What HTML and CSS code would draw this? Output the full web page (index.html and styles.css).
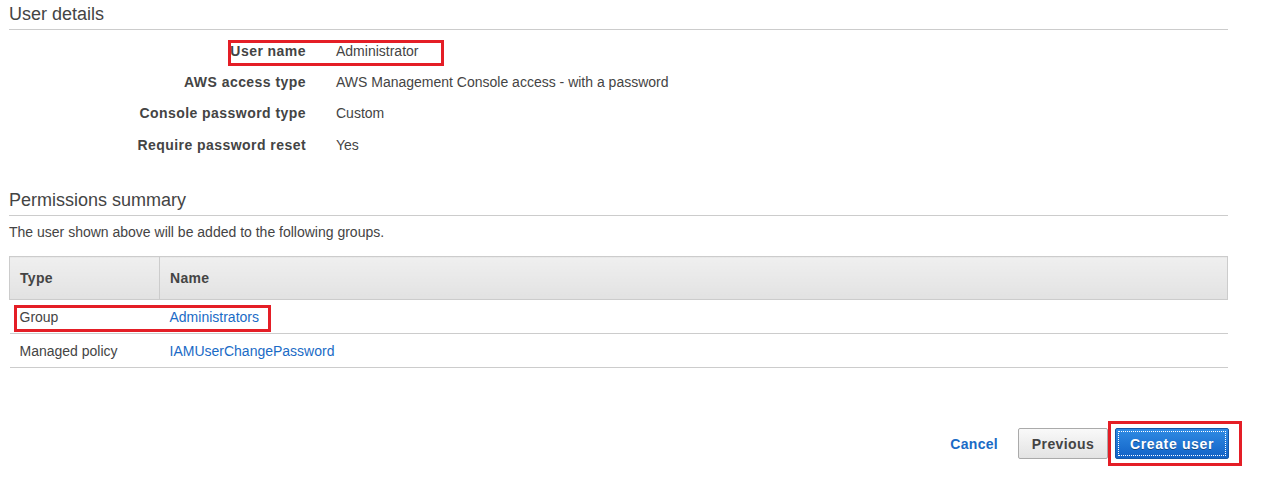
FILE: index.html
```html
<!DOCTYPE html>
<html lang="en">
<head>
<meta charset="utf-8">
<title>Review</title>
<link rel="stylesheet" href="styles.css">
</head>
<body>
<div class="page">
  <h2 class="section-title">User details</h2>
  <div class="details">
    <div class="label">User name</div><div class="value">Administrator</div>
    <div class="label">AWS access type</div><div class="value">AWS Management Console access - with a password</div>
    <div class="label">Console password type</div><div class="value">Custom</div>
    <div class="label">Require password reset</div><div class="value">Yes</div>
  </div>

  <h2 class="section-title perms">Permissions summary</h2>
  <p class="note">The user shown above will be added to the following groups.</p>

  <table class="grid">
    <thead>
      <tr><th class="col-type">Type</th><th>Name</th></tr>
    </thead>
    <tbody>
      <tr><td>Group</td><td><a href="#" class="link">Administrators</a></td></tr>
      <tr><td>Managed policy</td><td><a href="#" class="link">IAMUserChangePassword</a></td></tr>
    </tbody>
  </table>

  <div class="actions">
    <a href="#" class="cancel">Cancel</a>
    <button class="btn btn-secondary">Previous</button>
    <button class="btn btn-primary"><span class="focus">Create user</span></button>
  </div>

  <div class="annot annot-user"></div>
  <div class="annot annot-group"></div>
  <div class="annot annot-create"></div>
</div>
</body>
</html>
```

FILE: styles.css
```css
html, body {
  margin: 0;
  padding: 0;
  background: #ffffff;
}

body {
  font-family: "Liberation Sans", Arial, sans-serif;
  font-size: 14px;
  color: #444444;
}

.page {
  position: relative;
  width: 1219px;
  padding: 3px 0 40px 9px;
}

.section-title {
  margin: 0;
  font-size: 18px;
  font-weight: normal;
  line-height: 22px;
  color: #444444;
  padding-bottom: 4px;
  border-bottom: 1px solid #cccccc;
}

.section-title.perms {
  margin-top: 28px;
}

.details {
  display: grid;
  grid-template-columns: 297px 1fr;
  grid-template-rows: 31px 31px 32px 31px;
  column-gap: 30px;
  margin-top: 6px;
}

.details .label,
.details .value {
  line-height: 31px;
}

.details .label {
  text-align: right;
  font-weight: bold;
  letter-spacing: 0.45px;
}

.note {
  margin: 6px 0 0 0;
  line-height: 20px;
}

.grid {
  margin-top: 14px;
  width: 100%;
  border-collapse: collapse;
}

.grid th {
  height: 42px;
  padding: 0 10px;
  text-align: left;
  font-weight: bold;
  letter-spacing: 0.3px;
  background: linear-gradient(#efefef, #e2e2e2);
  border: 1px solid #cccccc;
}

.grid th.col-type {
  width: 129px;
}

.grid td {
  height: 33px;
  padding: 0 10px;
  border-bottom: 1px solid #cccccc;
}

.link {
  color: #1a6bc6;
  text-decoration: none;
}

.actions {
  display: flex;
  justify-content: flex-end;
  align-items: center;
  margin-top: 60px;
  margin-right: -1px;
}

.cancel {
  color: #1a6bc6;
  font-weight: bold;
  letter-spacing: 0.3px;
  text-decoration: none;
  margin-right: 20px;
}

.btn {
  font-family: "Liberation Sans", Arial, sans-serif;
  font-size: 14px;
  font-weight: bold;
  height: 31px;
  border-radius: 2px;
  cursor: pointer;
  padding: 0;
}

.btn-secondary {
  width: 90px;
  color: #444444;
  letter-spacing: 0.4px;
  background: linear-gradient(#f9f9f9, #e3e3e3);
  border: 1px solid #aaaaaa;
  margin-right: 7px;
}

.btn-primary {
  width: 114px;
  color: #ffffff;
  letter-spacing: 0.65px;
  background: linear-gradient(#2f8be3, #1262c6);
  border: 1px solid #1558a8;
  padding: 2px;
}

.btn-primary .focus {
  display: flex;
  align-items: center;
  justify-content: center;
  height: 100%;
  border: 1px dotted #ffffff;
  box-sizing: border-box;
  text-shadow: 0 1px 0 rgba(0, 0, 0, 0.35);
}

.annot {
  position: absolute;
  border: 3px solid #e41e26;
  box-sizing: border-box;
  pointer-events: none;
}

.annot-user {
  left: 228px;
  top: 40px;
  width: 216px;
  height: 26px;
}

.annot-group {
  left: 14px;
  top: 305px;
  width: 257px;
  height: 27px;
}

.annot-create {
  left: 1108px;
  top: 421px;
  width: 134px;
  height: 45px;
}
```
